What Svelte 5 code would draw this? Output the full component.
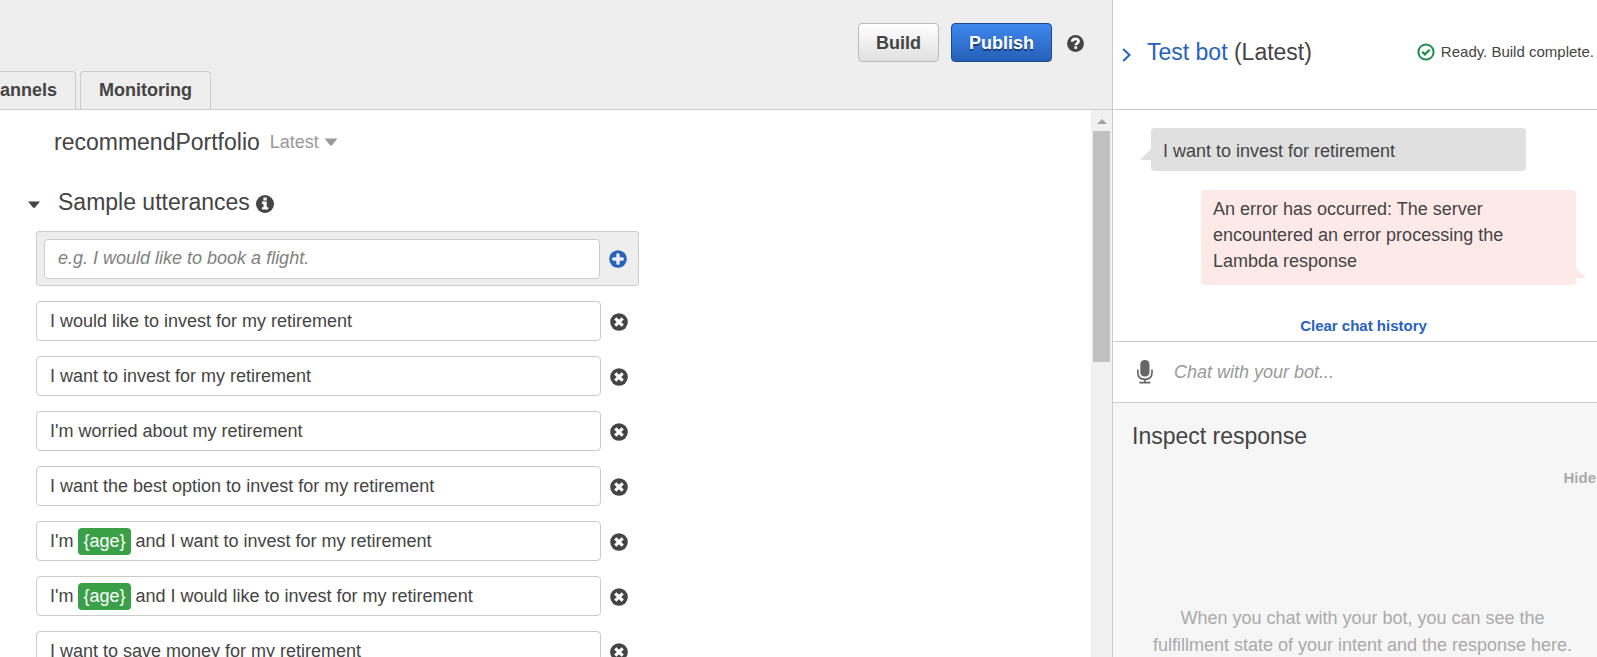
<script>
  let draft = $state('');
  let message = $state('');
  let utterances = $state([
    ['I would like to invest for my retirement'],
    ['I want to invest for my retirement'],
    ["I'm worried about my retirement"],
    ['I want the best option to invest for my retirement'],
    ["I'm ", '{age}', ' and I want to invest for my retirement'],
    ["I'm ", '{age}', ' and I would like to invest for my retirement'],
    ['I want to save money for my retirement']
  ]);

  function add() {
    if (draft.trim()) utterances.unshift([draft.trim()]);
    draft = '';
  }
</script>

<div class="page">
  <main>
    <header class="toolbar">
      <div class="actions">
        <button class="btn">Build</button>
        <button class="btn primary">Publish</button>
        <button class="icon" aria-label="Help">
          <svg width="17" height="17" viewBox="0 0 17 17"><circle cx="8.5" cy="8.5" r="8.4" fill="#444" /><path d="M5.1 6.7C5.3 4.7 6.6 3.9 8.5 3.9c1.9 0 3.1.9 3.1 2.4 0 2.1-2.9 1.9-2.9 3.9" fill="none" stroke="#fff" stroke-width="2.6" /><rect x="7.4" y="11.3" width="2.7" height="2.6" fill="#fff" /></svg>
        </button>
      </div>
      <nav>
        <a href="#channels">Channels</a>
        <a href="#monitoring">Monitoring</a>
      </nav>
    </header>

    <div class="body">
      <div class="editor">
        <div class="intent">
          <h1>recommendPortfolio</h1>
          <button class="version">Latest <svg width="14" height="8" viewBox="0 0 14 8"><path d="M0.5 0.5h13L8 7.2q-1 .8-2 0z" fill="#999" /></svg></button>
        </div>

        <div class="section">
          <button class="icon" aria-label="Collapse section"><svg width="12" height="8" viewBox="0 0 12 8"><path d="M0 .5h12L7 6.6q-1 .9-2 0z" fill="#444" /></svg></button>
          <h2>Sample utterances</h2>
          <svg class="info" width="18" height="18" viewBox="0 0 18 18"><circle cx="9" cy="9" r="9" fill="#444" /><path d="M7.4 2.6h3.3v2.8H7.4zM5.9 6.6h4.8v5.6h1.6v2.4H5.9v-2.4h1.6V9H5.9z" fill="#fff" /></svg>
        </div>

        <form class="new" onsubmit={(e) => { e.preventDefault(); add(); }}>
          <input class="field" aria-label="New utterance" placeholder="e.g. I would like to book a flight." bind:value={draft} />
          <button class="icon" aria-label="Add utterance">
            <svg width="18" height="18" viewBox="0 0 18 18"><circle cx="9" cy="9" r="8.8" fill="#2662be" /><path d="M9 4.7v8.6M4.7 9h8.6" stroke="#eee" stroke-width="3.4" stroke-linecap="round" /></svg>
          </button>
        </form>

        <ul>
          {#each utterances as parts, i}
            <li>
              {#if parts.length === 1}
                <input class="field" aria-label="Utterance {i + 1}" bind:value={parts[0]} />
              {:else}
                <div class="field rich" role="textbox" tabindex="0" aria-label="Utterance {i + 1}">{#each parts as part}{#if part.startsWith('{')}<span class="slot">{part}</span>{:else}{part}{/if}{/each}</div>
              {/if}
              <button class="icon" aria-label="Remove utterance" onclick={() => utterances.splice(i, 1)}>
                <svg width="18" height="18" viewBox="0 0 18 18"><circle cx="9" cy="9" r="8.8" fill="#444" /><path d="M6.4 6.4l5.2 5.2M11.6 6.4l-5.2 5.2" stroke="#fff" stroke-width="3.2" stroke-linecap="square" /></svg>
              </button>
            </li>
          {/each}
        </ul>
      </div>
      <div class="scrollbar" aria-hidden="true">
        <svg width="10" height="5" viewBox="0 0 10 5"><path d="M0 5L5 0l5 5z" fill="#a3a3a3" /></svg>
        <div class="thumb"></div>
      </div>
    </div>
  </main>

  <aside>
    <header class="bot">
      <button class="icon chevron" aria-label="Collapse test panel"><svg width="10" height="14" viewBox="0 0 10 14"><path d="M1.2 1l6.3 6-6.3 6" fill="none" stroke="#2662be" stroke-width="2" /></svg></button>
      <h2><a href="#bot">Test bot</a> (Latest)</h2>
      <p class="status">
        <svg width="18" height="18" viewBox="0 0 18 18"><circle cx="9" cy="9" r="7.6" fill="none" stroke="#1b8f4a" stroke-width="2" /><path d="M5.2 8.7l2.7 2.7 4.8-4.7" fill="none" stroke="#1b8f4a" stroke-width="2.3" /></svg>
        Ready. Build complete.
      </p>
    </header>

    <section class="chat">
      <p class="bubble user">I want to invest for retirement</p>
      <p class="bubble error">An error has occurred: The server encountered an error processing the Lambda response</p>
      <button class="clear">Clear chat history</button>
    </section>

    <div class="compose">
      <button class="icon" aria-label="Speak">
        <svg width="18" height="24" viewBox="0 0 18 24"><rect x="4.3" y="0" width="9.2" height="16.6" rx="4.4" fill="#666" /><path d="M1.8 9.5v3c0 4.2 2.6 6.8 7.1 6.8s7.1-2.6 7.1-6.8v-3M8.9 19v4M3.4 22.6h11" fill="none" stroke="#666" stroke-width="1.7" /></svg>
      </button>
      <input aria-label="Chat with your bot" placeholder="Chat with your bot..." bind:value={message} />
    </div>

    <section class="inspect">
      <h2>Inspect response</h2>
      <button class="hide">Hide</button>
      <p>When you chat with your bot, you can see the fulfillment state of your intent and the response here.</p>
    </section>
  </aside>
</div>

<style>
  :global(body) { margin: 0; background: #fff; }
  .page, .page * { box-sizing: border-box; }
  .page {
    display: flex;
    height: 100vh;
    overflow: hidden;
    color: #444;
    font: 18px/26px "Liberation Sans", Arial, sans-serif;
  }
  h1, h2, p, ul { margin: 0; padding: 0; font-weight: 400; }
  h1, h2 { font-size: 23px; line-height: 28px; white-space: nowrap; }
  button, input { font: inherit; color: inherit; }
  button { padding: 0; border: 0; background: none; cursor: pointer; }
  a { color: #2662be; text-decoration: none; }
  svg { display: block; flex: none; }
  .icon { flex: none; }

  main { flex: 1; min-width: 0; display: flex; flex-direction: column; }
  .toolbar {
    flex: none;
    height: 110px;
    padding-top: 23px;
    display: flex;
    flex-direction: column;
    justify-content: space-between;
    background: #eee;
    border-bottom: 1px solid #ccc;
  }
  .actions { display: flex; align-items: center; justify-content: flex-end; padding-right: 28px; }
  .btn {
    height: 39px;
    margin-right: 12px;
    padding: 0 17px;
    border: 1px solid #bbb;
    border-radius: 4px;
    background: linear-gradient(#fff, #e0e0e0);
    font-weight: 700;
  }
  .primary {
    margin-right: 15px;
    border-color: #1c4a8f;
    background: linear-gradient(#3f88ee, #2560b8);
    color: #fff;
    text-shadow: 0 2px 1px rgba(0, 0, 0, 0.45);
  }
  .actions .icon { padding-top: 2px; }
  nav { display: flex; gap: 4px; margin-left: -43px; }
  nav a {
    height: 38px;
    padding: 0 18px;
    border: 1px solid #ccc;
    border-bottom: 0;
    border-radius: 4px 4px 0 0;
    color: #444;
    font-weight: 700;
    line-height: 36px;
  }

  .body { flex: 1; min-height: 0; display: flex; }
  .editor { flex: 1; min-width: 0; padding: 18px 0 0 36px; overflow: hidden; }
  .intent { display: flex; align-items: center; gap: 10px; padding-left: 18px; }
  .version { display: flex; align-items: center; gap: 5px; color: #999; }
  .section { display: flex; align-items: center; margin: 32px 0 15px -8px; }
  .section h2 { margin: 0 6px 0 18px; }
  .info { margin-top: 4px; }
  .section .icon { margin-top: 5px; }

  .field {
    flex: 1;
    min-width: 0;
    height: 40px;
    padding: 0 13px;
    border: 1px solid #ccc;
    border-radius: 4px;
    background: #fff;
    line-height: 38px;
  }
  .new {
    display: flex;
    align-items: center;
    gap: 9px;
    max-width: 603px;
    height: 55px;
    padding: 0 11px 0 7px;
    border: 1px solid #ccc;
    border-radius: 3px;
    background: #eee;
  }
  input::placeholder { color: #808080; font-style: italic; opacity: 1; }
  ul { list-style: none; }
  li { display: flex; align-items: center; gap: 9px; max-width: 592px; margin-top: 15px; }
  li .icon { padding-top: 1px; }
  .rich { white-space: pre; }
  .slot {
    display: inline-block;
    height: 27px;
    padding: 0 5px;
    border-radius: 4px;
    background: #3aa047;
    color: #fff;
    line-height: 27px;
  }

  .scrollbar {
    flex: none;
    width: 21px;
    padding: 9px 2px 0;
    display: flex;
    flex-direction: column;
    align-items: center;
    gap: 7px;
    background: #f1f1f1;
  }
  .thumb { width: 17px; height: 43%; background: #c1c1c1; }

  aside {
    flex: none;
    width: 485px;
    display: flex;
    flex-direction: column;
    border-left: 1px solid #ccc;
    overflow: hidden;
  }
  .bot {
    flex: none;
    height: 110px;
    padding: 0 3px 6px 9px;
    display: flex;
    align-items: center;
    border-bottom: 1px solid #ccc;
  }
  .bot h2 { margin-left: 15px; }
  .chevron { margin-top: 7px; }
  .status { display: flex; align-items: center; gap: 6px; margin-left: auto; font-size: 15px; white-space: nowrap; }

  .chat {
    flex: none;
    height: 232px;
    padding: 18px 21px 0 38px;
    display: flex;
    flex-direction: column;
    border-bottom: 1px solid #ccc;
  }
  .bubble { position: relative; width: 375px; border-radius: 4px; }
  .bubble::after { content: ""; position: absolute; border-top: 11px solid transparent; }
  .user { padding: 10px 12px 7px; background: #e0e0e0; }
  .user::after { left: -11px; bottom: 11px; border-right: 11px solid #e0e0e0; }
  .error { align-self: flex-end; margin-top: 19px; padding: 6px 12px 11px; background: #fde9e8; }
  .error::after { right: -10px; bottom: 7px; border-left: 11px solid #fde9e8; }
  .clear { margin: 28px 0 0 0; color: #2662be; font-size: 15px; font-weight: 700; }

  .compose {
    flex: none;
    height: 61px;
    padding-left: 23px;
    display: flex;
    align-items: center;
    gap: 20px;
    border-bottom: 1px solid #ccc;
  }
  .compose input { flex: 1; min-width: 0; padding: 0; border: 0; }
  .compose input::placeholder { color: #999; }

  .inspect {
    flex: 1;
    display: flex;
    flex-direction: column;
    padding: 19px 1px 0 19px;
    background: #f6f6f6;
  }
  .hide { align-self: flex-end; margin-top: 15px; color: #aaa; font-size: 15px; font-weight: 700; }
  .inspect p { padding: 114px 19px 0 16px; color: #aaa; line-height: 27px; text-align: center; }
</style>
